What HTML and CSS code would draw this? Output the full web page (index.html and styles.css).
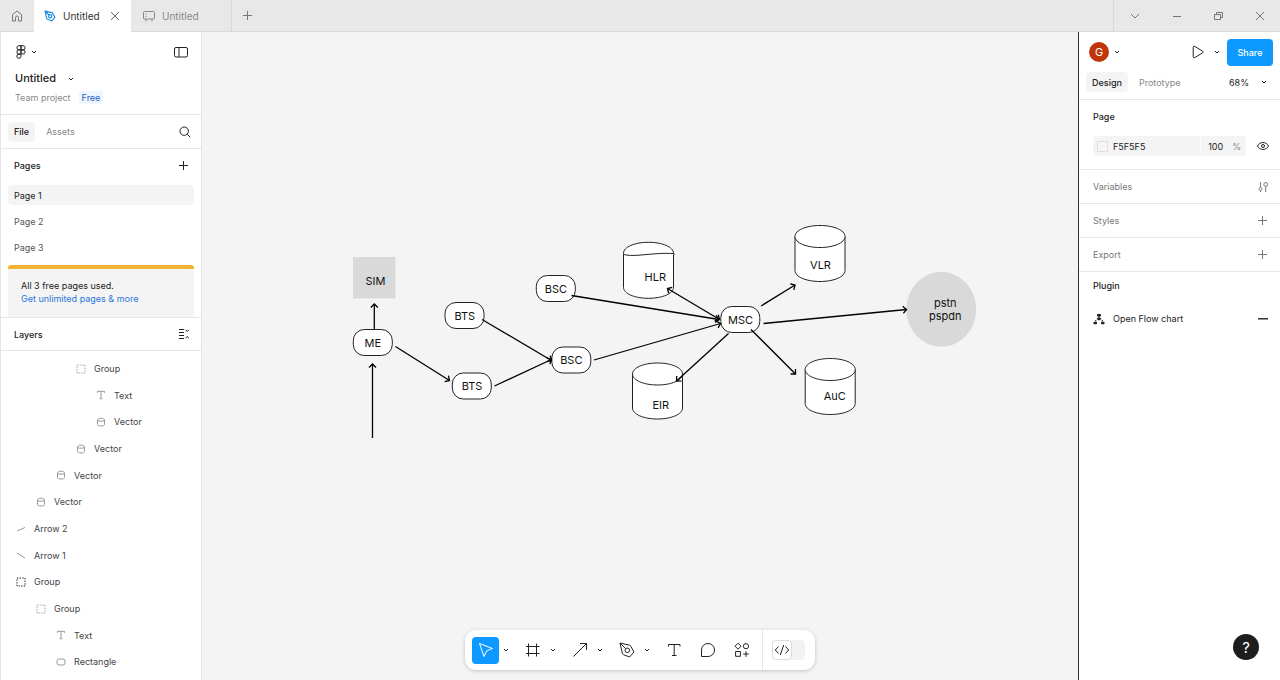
FILE: index.html
```
<!DOCTYPE html>
<html lang="en">
<head>
<meta charset="utf-8">
<title>Untitled</title>
<link rel="stylesheet" href="styles.css">
</head>
<body>
<svg class="defs" aria-hidden="true">
  <symbol id="chevron" viewBox="0 0 8 8"><path d="M2 3l2 2 2-2"/></symbol>
  <symbol id="plus" viewBox="0 0 12 12"><path d="M5.500 1v9M1 5.500h9"/></symbol>
  <symbol id="cross" viewBox="0 0 12 12"><path d="M2 2l8 8M10 2l-8 8"/></symbol>
  <symbol id="pen" viewBox="0 0 20 20"><path d="M3 3l9.500 2.200c.8.2 1.300.7 1.500 1.400l3 5.400-4.500 5-5.900-2.300c-.7-.3-1.100-.8-1.300-1.500zM3 3l5.600 5.600"/><circle cx="10.300" cy="10.300" r="2.300"/></symbol>
  <symbol id="group" viewBox="0 0 10 10"><rect x="1" y="1" width="8" height="8" stroke-dasharray="1.300 1.360"/></symbol>
  <symbol id="text" viewBox="0 0 10 10"><path d="M1.500 2.800V1.300h7v1.500M5 1.300v7.400M3.700 8.700h2.600"/></symbol>
  <symbol id="vector" viewBox="0 0 10 10"><path d="M1.500 3c0-2.400 7-2.400 7 0v4.500c0 2-7 2-7 0zM1.500 3.600c1.400.8 5.600.8 7 0"/></symbol>
</svg>

<header class="titlebar">
  <button class="home" aria-label="Home"><svg class="i12" viewBox="0 0 12 12"><path d="M1.500 4.600L6 1l4.500 3.600V11H7.500V7.500a1.500 1.500 0 0 0-3 0V11h-3z"/></svg></button>
  <div class="tab tab-active">
    <svg class="i14 blue" viewBox="0 0 20 20"><use href="#pen"/></svg>
    <span class="tab-name">Untitled</span>
    <button aria-label="Close tab"><svg class="i12"><use href="#cross"/></svg></button>
  </div>
  <div class="tab">
    <svg class="i14" viewBox="0 0 14 14"><path d="M4 10H2.500a1 1 0 0 1-1-1V3.500a1 1 0 0 1 1-1h9a1 1 0 0 1 1 1V9a1 1 0 0 1-1 1H10M4 12.500V10h6v2.500M4 4.700v1M4 7v1"/></svg>
    <span class="tab-name">Untitled</span>
  </div>
  <button class="new-tab" aria-label="New tab"><svg class="i12"><use href="#plus"/></svg></button>
  <div class="window-controls">
    <button aria-label="Tab list"><svg class="i12" viewBox="0 0 12 12"><path d="M2 4l4 4 4-4"/></svg></button>
    <button aria-label="Minimize"><svg class="i12" viewBox="0 0 12 12"><path d="M2 6.500h8"/></svg></button>
    <button aria-label="Restore"><svg class="i12" viewBox="0 0 12 12"><path d="M1.500 4.500h6v5h-6zM3.500 4.500v-2h6v5h-2"/></svg></button>
    <button aria-label="Close"><svg class="i12"><use href="#cross"/></svg></button>
  </div>
</header>

<div class="workspace">
  <aside class="left">
    <div class="file-head">
      <div class="menu-row">
        <button class="logo" aria-label="Main menu"><svg class="i14" viewBox="0 0 14 14"><path d="M7 .700H5a2.100 2.100 0 0 0 0 4.200h2zM7 .700h2a2.100 2.100 0 0 1 0 4.200H7zM7 4.900H5a2.100 2.100 0 0 0 0 4.200h2zM7 9.100H5a2.100 2.100 0 1 0 2 2.100z"/><circle cx="9" cy="7" r="2.100"/></svg><svg class="i8"><use href="#chevron"/></svg></button>
        <button aria-label="Toggle panels"><svg class="i14" viewBox="0 0 14 14"><rect x=".5" y="2.500" width="13" height="9.500" rx="1.500"/><path d="M5 2.500V12"/></svg></button>
      </div>
      <button class="file-name">Untitled <svg class="i8"><use href="#chevron"/></svg></button>
      <div class="project">Team project <span class="plan">Free</span></div>
    </div>
    <div class="tabs-row">
      <button class="pill on">File</button><button class="pill">Assets</button>
      <button class="push" aria-label="Search"><svg class="i12" viewBox="0 0 12 12"><circle cx="5.200" cy="5.200" r="4.200"/><path d="M8.300 8.300l3 3"/></svg></button>
    </div>
    <section class="pages">
      <div class="pages-head"><h2>Pages</h2><button class="push" aria-label="Add page"><svg class="i12"><use href="#plus"/></svg></button></div>
      <div class="page-list">
        <button class="page current">Page 1</button>
        <button class="page">Page 2</button>
        <button class="page">Page 3</button>
      </div>
      <div class="upsell">All 3 free pages used.<br><a href="#upgrade">Get unlimited pages &amp; more</a></div>
    </section>
    <div class="layers-head"><h2>Layers</h2><button class="push" aria-label="Collapse layers"><svg class="i12" viewBox="0 0 12 12"><path d="M1 1.500h5M1 4.500h5M1 7.500h5M1 10.500h5M7.500 1.800l1.700 1.700 1.700-1.700M7.500 10.200l1.700-1.700 1.700 1.700"/></svg></button></div>
    <ul class="layers">
      <li class="l3"><svg class="i10"><use href="#group"/></svg>Group</li>
      <li class="l4"><svg class="i10"><use href="#text"/></svg>Text</li>
      <li class="l4"><svg class="i10"><use href="#vector"/></svg>Vector</li>
      <li class="l3"><svg class="i10"><use href="#vector"/></svg>Vector</li>
      <li class="l2"><svg class="i10"><use href="#vector"/></svg>Vector</li>
      <li class="l1"><svg class="i10"><use href="#vector"/></svg>Vector</li>
      <li><svg class="i10" viewBox="0 0 10 10"><path d="M1 7l8-3.500"/></svg>Arrow 2</li>
      <li><svg class="i10" viewBox="0 0 10 10"><path d="M1 3l8 5"/></svg>Arrow 1</li>
      <li class="strong"><svg class="i10"><use href="#group"/></svg>Group</li>
      <li class="l1"><svg class="i10"><use href="#group"/></svg>Group</li>
      <li class="l2"><svg class="i10"><use href="#text"/></svg>Text</li>
      <li class="l2"><svg class="i10" viewBox="0 0 10 10"><rect x="1" y="2" width="8" height="6" rx="2"/></svg>Rectangle</li>
    </ul>
  </aside>

  <main class="canvas">
    <svg class="diagram" width="876" height="648" viewBox="202 32 876 648">
      <defs>
        <marker id="head" markerUnits="userSpaceOnUse" markerWidth="10" markerHeight="10" refX="7" refY="5" orient="auto-start-reverse"><path class="wire" d="M3.500 1.500L7 5 3.500 8.500"/></marker>
        <path id="cylinder" d="M0 11.500C0 5.200 11.200.500 25 .500s25 4.700 25 11v34c0 6.300-11.200 11-25 11S0 51.800 0 45.500z"/>
        <path id="rim" d="M0 11.500c0 6.300 11.200 11 25 11s25-4.700 25-11"/>
        <rect id="node" width="39" height="26" rx="11"/>
      </defs>
      <rect class="grey" x="353" y="257" width="42.500" height="41.500"/>
      <ellipse class="grey" cx="941.300" cy="309.300" rx="35" ry="37.500"/>
      <g class="shape">
        <use href="#node" x="353.300" y="329.500"/>
        <use href="#node" x="445" y="302.500"/>
        <use href="#node" x="452.300" y="373"/>
        <use href="#node" x="536.300" y="275.500"/>
        <use href="#node" x="551.800" y="347"/>
        <use href="#node" x="720.800" y="306.500"/>
        <use href="#cylinder" x="623.500" y="241.800"/><path d="M624 254.500q5 1.500 16 .600c14-1.200 22-2.200 34-1.500v1.500"/>
        <use href="#cylinder" x="795" y="225"/><use href="#rim" x="795" y="225"/>
        <use href="#cylinder" x="632.500" y="362.500"/><use href="#rim" x="632.500" y="362.500"/>
        <use href="#cylinder" x="805.200" y="358"/><use href="#rim" x="805.200" y="358"/>
      </g>
      <g class="wire">
        <path marker-end="url(#head)" d="M372.500 438v-74"/>
        <path marker-end="url(#head)" d="M374.300 329v-25"/>
        <path marker-end="url(#head)" d="M395.500 346.500l54 34"/>
        <path marker-end="url(#head)" d="M482 319.500l69.500 41"/>
        <path marker-end="url(#head)" d="M494.500 386l57-26.500"/>
        <path marker-end="url(#head)" d="M571.500 295.500L719 319.500"/>
        <path marker-end="url(#head)" d="M594 360L720.500 323.500"/>
        <path marker-end="url(#head)" marker-start="url(#head)" d="M667.500 288.500l52 31"/>
        <path marker-end="url(#head)" d="M761 306l34-21"/>
        <path marker-end="url(#head)" d="M763.500 323.500L906.500 309.500"/>
        <path marker-end="url(#head)" d="M728.500 333.500L676.500 381"/>
        <path marker-end="url(#head)" d="M751 329.500l44.500 44.500"/>
      </g>
      <g class="labels">
        <text x="375.500" y="285">SIM</text>
        <text x="372.800" y="347">ME</text>
        <text x="464.800" y="320">BTS</text>
        <text x="472" y="390">BTS</text>
        <text x="556" y="292.500">BSC</text>
        <text x="571.300" y="364">BSC</text>
        <text x="740.500" y="324">MSC</text>
        <text x="655.300" y="281">HLR</text>
        <text x="820.500" y="269">VLR</text>
        <text x="660.800" y="409">EIR</text>
        <text x="834.800" y="400">AuC</text>
        <text x="945.300" y="307">pstn</text>
        <text x="945.300" y="319.500">pspdn</text>
      </g>
    </svg>

    <div class="toolbar">
      <div class="tool"><button class="selected" aria-label="Move"><svg class="i20" viewBox="0 0 20 20"><path d="M3.500 3.500l13 5-5.700 2.300L8 16.500z"/></svg></button><button class="more" aria-label="Move tools"><svg class="i8"><use href="#chevron"/></svg></button></div>
      <div class="tool"><button aria-label="Frame"><svg class="i20" viewBox="0 0 20 20"><path d="M5.500 3.500v13M13.500 3.500v13M3 6.500h13.500M3 13.500h13.500"/></svg></button><button class="more" aria-label="Region tools"><svg class="i8"><use href="#chevron"/></svg></button></div>
      <div class="tool"><button aria-label="Arrow"><svg class="i20" viewBox="0 0 20 20"><path d="M3.500 16.500l13-13M10 3.500h6.500V10"/></svg></button><button class="more" aria-label="Shape tools"><svg class="i8"><use href="#chevron"/></svg></button></div>
      <div class="tool"><button aria-label="Pen"><svg class="i20"><use href="#pen"/></svg></button><button class="more" aria-label="Creation tools"><svg class="i8"><use href="#chevron"/></svg></button></div>
      <button aria-label="Text"><svg class="i20" viewBox="0 0 20 20"><path d="M4.500 6.500V4.500h11.500v2M10.200 4.500v11.500M8 15.500h4.500"/></svg></button>
      <button aria-label="Comment"><svg class="i20" viewBox="0 0 20 20"><path d="M3.500 16.500V10a6.500 6.500 0 1 1 6.500 6.500z"/></svg></button>
      <button aria-label="Actions"><svg class="i20" viewBox="0 0 20 20"><path d="M6 3.200l3 3-3 3-3-3zM3.600 11.500h4.800v4.800H3.600zM14 11.200v5.600M11.200 14h5.600"/><circle cx="14" cy="6.200" r="2.600"/></svg></button>
      <div class="dev"><button class="switch" aria-label="Dev Mode"><span class="thumb"><svg class="i16" viewBox="0 0 16 16"><path d="M4.500 4.500L1.300 8l3.200 3.500M11.500 4.500L14.700 8l-3.200 3.500M9.700 3L6.300 13"/></svg></span></button></div>
    </div>
  </main>

  <aside class="right">
    <div class="user-row">
      <button class="user" aria-label="Account"><span class="avatar">G</span><svg class="i8"><use href="#chevron"/></svg></button>
      <button class="play" aria-label="Present"><svg class="i14" viewBox="0 0 14 14"><path d="M2.200 2.200a1 1 0 0 1 1.500-.8l8 4.800a1 1 0 0 1 0 1.600l-8 4.800a1 1 0 0 1-1.500-.8z"/></svg></button>
      <button class="play-more" aria-label="Present options"><svg class="i8"><use href="#chevron"/></svg></button>
      <button class="share">Share</button>
    </div>
    <div class="mode-row">
      <button class="pill on">Design</button><button class="pill">Prototype</button>
      <button class="zoom">68% <svg class="i8"><use href="#chevron"/></svg></button>
    </div>
    <section class="page-fill">
      <h2>Page</h2>
      <div class="fill-row">
        <div class="field"><span class="swatch"></span><input class="hex" aria-label="Page colour" value="F5F5F5"><input class="opacity" aria-label="Opacity" value="100"><span class="percent">%</span></div>
        <button aria-label="Toggle visibility"><svg class="i12" viewBox="0 0 12 12"><path d="M.500 6c2-4.600 9-4.600 11 0-2 4.600-9 4.600-11 0z"/><circle cx="6" cy="6" r="1.500"/></svg></button>
      </div>
    </section>
    <section class="prop"><h2>Variables</h2><button aria-label="Variables"><svg class="i12" viewBox="0 0 12 12"><path d="M3.500 1v5M8.700 11V5.500M3.500 10v1M8.700 1v.500"/><path d="M3.500 6l1.800 2-1.800 2-1.800-2z"/><circle cx="8.700" cy="3.500" r="1.900"/></svg></button></section>
    <section class="prop"><h2>Styles</h2><button aria-label="Add style"><svg class="i12"><use href="#plus"/></svg></button></section>
    <section class="prop"><h2>Export</h2><button aria-label="Add export"><svg class="i12"><use href="#plus"/></svg></button></section>
    <section class="plugin">
      <h2>Plugin</h2>
      <div class="plugin-row"><svg class="i12 solid" viewBox="0 0 12 12"><rect x="4" y="1" width="4" height="2.400" rx=".6"/><path d="M5.400 3h1.200v1.600l2 1.300L6 7.600 3.400 5.900l2-1.300z"/><rect x=".5" y="8.800" width="3.500" height="2.400" rx=".6"/><rect x="8" y="8.800" width="3.500" height="2.400" rx=".6"/><rect x="2" y="7.200" width="1.400" height="1"/><rect x="8.600" y="7.200" width="1.400" height="1"/></svg><span>Open Flow chart</span><button aria-label="Remove plugin"><svg class="i12 bold" viewBox="0 0 12 12"><path d="M1 5.800h10"/></svg></button></div>
    </section>
    <button class="help" aria-label="Help">?</button>
  </aside>
</div>
</body>
</html>
```
FILE: styles.css
```
* { box-sizing: border-box; }
body {
  margin: 0;
  min-height: 100vh;
  display: flex;
  flex-direction: column;
  font: 9px/13px Inter, "Liberation Sans", sans-serif;
  color: #222;
  background: #fff;
}
button {
  display: inline-flex;
  align-items: center;
  justify-content: center;
  padding: 0;
  border: 0;
  background: none;
  font: inherit;
  color: inherit;
}
h2 { margin: 0; font: inherit; font-weight: 500; }
svg { flex: none; fill: none; stroke: currentColor; }
.defs { position: absolute; width: 0; height: 0; }
.i8 { width: 8px; height: 8px; }
.i10 { width: 10px; height: 10px; }
.i12 { width: 12px; height: 12px; }
.i14 { width: 14px; height: 14px; }
.i16 { width: 16px; height: 16px; }
.i20 { width: 20px; height: 20px; }
.solid { fill: currentColor; stroke: none; }
.bold { stroke-width: 1.4; }
.blue { color: #1787e0; stroke-width: 1.6; }
.push { margin-left: auto; }

/* Window title bar */
.titlebar {
  display: flex;
  height: 32px;
  background: #e8e8e8;
  border-bottom: 1px solid #dadada;
  color: #777;
  font-size: 10px;
}
.home { width: 34px; }
.tab {
  display: flex;
  align-items: center;
  gap: 6px;
  width: 101px;
  height: 32px;
  padding-left: 11px;
  border-right: 1px solid #d8d8d8;
  color: #888;
}
.tab-active {
  width: 97px;
  padding: 0 10px 0 9px;
  border: 0;
  background: #fff;
  color: #333;
}
.tab-active button { margin-left: auto; color: #666; }
.new-tab { width: 31px; }
.window-controls {
  display: flex;
  margin-left: auto;
  border-left: 1px solid #d8d8d8;
}
.window-controls button { width: 42px; }
.window-controls button:last-child { width: 40px; }

.workspace { flex: 1; display: flex; }

/* Left panel */
.left {
  width: 202px;
  flex: none;
  border: solid #e4e4e4;
  border-width: 0 1px;
}
.file-head { padding: 0 13px 4px; border-bottom: 1px solid #e6e6e6; }
.menu-row {
  display: flex;
  align-items: center;
  justify-content: space-between;
  height: 40px;
}
.logo { gap: 2px; }
.file-name { gap: 11px; height: 13px; padding-left: 1px; font-size: 11px; font-weight: 500; }
.project {
  display: flex;
  align-items: center;
  gap: 8px;
  height: 25px;
  padding-left: 1px;
  color: #888;
}
.plan { padding: 0 3px; border-radius: 3px; background: #eef5fd; color: #1a5fc8; }
.tabs-row {
  display: flex;
  align-items: center;
  gap: 5px;
  height: 34px;
  padding: 0 10px 0 7px;
  border-bottom: 1px solid #e6e6e6;
}
.pill { height: 20px; padding: 0 6px; border-radius: 4px; color: #888; }
.pill.on { background: #f4f4f4; color: #222; font-weight: 500; }
.pages { padding: 0 7px; }
.pages-head {
  display: flex;
  align-items: center;
  height: 33px;
  padding: 0 4px 0 6px;
}
.page-list { display: flex; flex-direction: column; gap: 6px; padding: 3px 0 8px; }
.page {
  justify-content: flex-start;
  height: 20px;
  padding-left: 6px;
  border-radius: 4px;
  color: #555;
}
.page.current { background: #f4f4f4; color: #222; }
.upsell {
  padding: 10px 13px 12px;
  border-top: 4px solid #f2b430;
  border-radius: 3px 3px 0 0;
  background: #f4f4f4;
}
.upsell a { color: #2a78dc; text-decoration: none; }
.layers-head {
  display: flex;
  align-items: center;
  height: 34px;
  padding: 0 11px 0 13px;
  border: solid #e6e6e6;
  border-width: 1px 0;
}
.layers {
  display: grid;
  grid-auto-rows: 27px 26px 27px;
  margin: 0;
  padding: 4px 0 0;
  list-style: none;
}
.layers li { display: flex; align-items: center; gap: 8px; padding-left: 15px; color: #444; }
.layers svg { color: #999; }
.layers .l1 { padding-left: 35px; }
.layers .l2 { padding-left: 55px; }
.layers .l3 { padding-left: 75px; }
.layers .l4 { padding-left: 95px; }
.layers .strong svg { color: #111; }

/* Canvas */
.canvas { position: relative; flex: 1; min-width: 0; overflow: hidden; background: #f4f4f4; }
.diagram { position: absolute; left: 0; top: 0; }
.shape { fill: #fff; stroke: #222; stroke-width: 1; }
.grey { fill: #d9d9d9; stroke: none; }
.wire { fill: none; stroke: #000; stroke-width: 1.3; }
.labels { fill: #111; stroke: none; font-size: 11px; text-anchor: middle; }

.toolbar {
  position: absolute;
  bottom: 10px;
  left: 50%;
  transform: translateX(-50%);
  display: flex;
  align-items: center;
  gap: 7px;
  height: 40px;
  padding-left: 7px;
  border-radius: 11px;
  background: #fff;
  box-shadow: 0 1px 4px rgba(0, 0, 0, .2);
}
.toolbar button { width: 27px; height: 27px; border-radius: 4px; }
.tool { display: flex; }
.toolbar .more { width: 13px; }
.toolbar .selected { background: #0d99ff; color: #fff; }
.dev {
  display: flex;
  align-items: center;
  align-self: stretch;
  padding: 0 10px 0 9px;
  border-left: 1px solid #e8e8e8;
}
.toolbar .switch {
  justify-content: flex-start;
  width: 33px;
  height: 20px;
  background: #f2f2f2;
}
.thumb {
  display: flex;
  align-items: center;
  justify-content: center;
  width: 20px;
  height: 20px;
  border: 1px solid #ddd;
  border-radius: 4px;
  background: #fff;
}

/* Right panel */
.right {
  position: relative;
  width: 202px;
  flex: none;
  border-left: 1px solid #333;
}
.user-row { display: flex; align-items: center; height: 40px; padding: 0 7px 0 10px; }
.user { gap: 4px; margin-right: auto; }
.avatar {
  width: 20px;
  height: 20px;
  border-radius: 50%;
  background: #bf360c;
  color: #fff;
  font-size: 11px;
  line-height: 20px;
}
.play-more { width: 8px; margin: 0 6px 0 8px; }
.share {
  width: 46px;
  height: 27px;
  border-radius: 4px;
  background: #0d99ff;
  color: #fff;
  font-weight: 500;
}
.mode-row {
  display: flex;
  gap: 5px;
  height: 28px;
  padding: 0 12px 0 7px;
  border-bottom: 1px solid #e8e8e8;
}
.zoom { gap: 11px; height: 20px; margin-left: auto; }
.page-fill { height: 70px; padding: 0 11px 0 14px; border-bottom: 1px solid #e8e8e8; }
.page-fill h2 { line-height: 33px; }
.fill-row { display: flex; align-items: center; justify-content: space-between; padding-top: 3px; }
.field {
  display: flex;
  align-items: center;
  width: 153px;
  height: 20px;
  padding-left: 4px;
  border-radius: 4px;
  background: #f4f4f4;
}
.swatch { width: 11px; height: 11px; border: 1px solid #e0e0e0; background: #f5f5f5; }
.field input {
  min-width: 0;
  height: 20px;
  padding: 0 0 0 5px;
  border: 0;
  background: none;
  font: inherit;
  color: #222;
}
.hex { flex: 1; }
.field .opacity { width: 32px; padding-left: 7px; border-left: 1px solid #fafafa; }
.percent { padding-right: 5px; color: #888; }
.prop {
  display: flex;
  align-items: center;
  justify-content: space-between;
  height: 34px;
  padding: 0 11px 0 14px;
  border-bottom: 1px solid #e8e8e8;
  color: #777;
}
.prop h2 { font-weight: 400; }
.plugin { padding: 0 11px 0 14px; }
.plugin h2 { line-height: 28px; }
.plugin-row { display: flex; align-items: center; gap: 8px; height: 37px; }
.plugin-row button { margin-left: auto; }
.help {
  position: absolute;
  right: 21px;
  bottom: 20px;
  width: 26px;
  height: 26px;
  border-radius: 50%;
  background: #1e1e1e;
  color: #fff;
  font-size: 15px;
}
```
